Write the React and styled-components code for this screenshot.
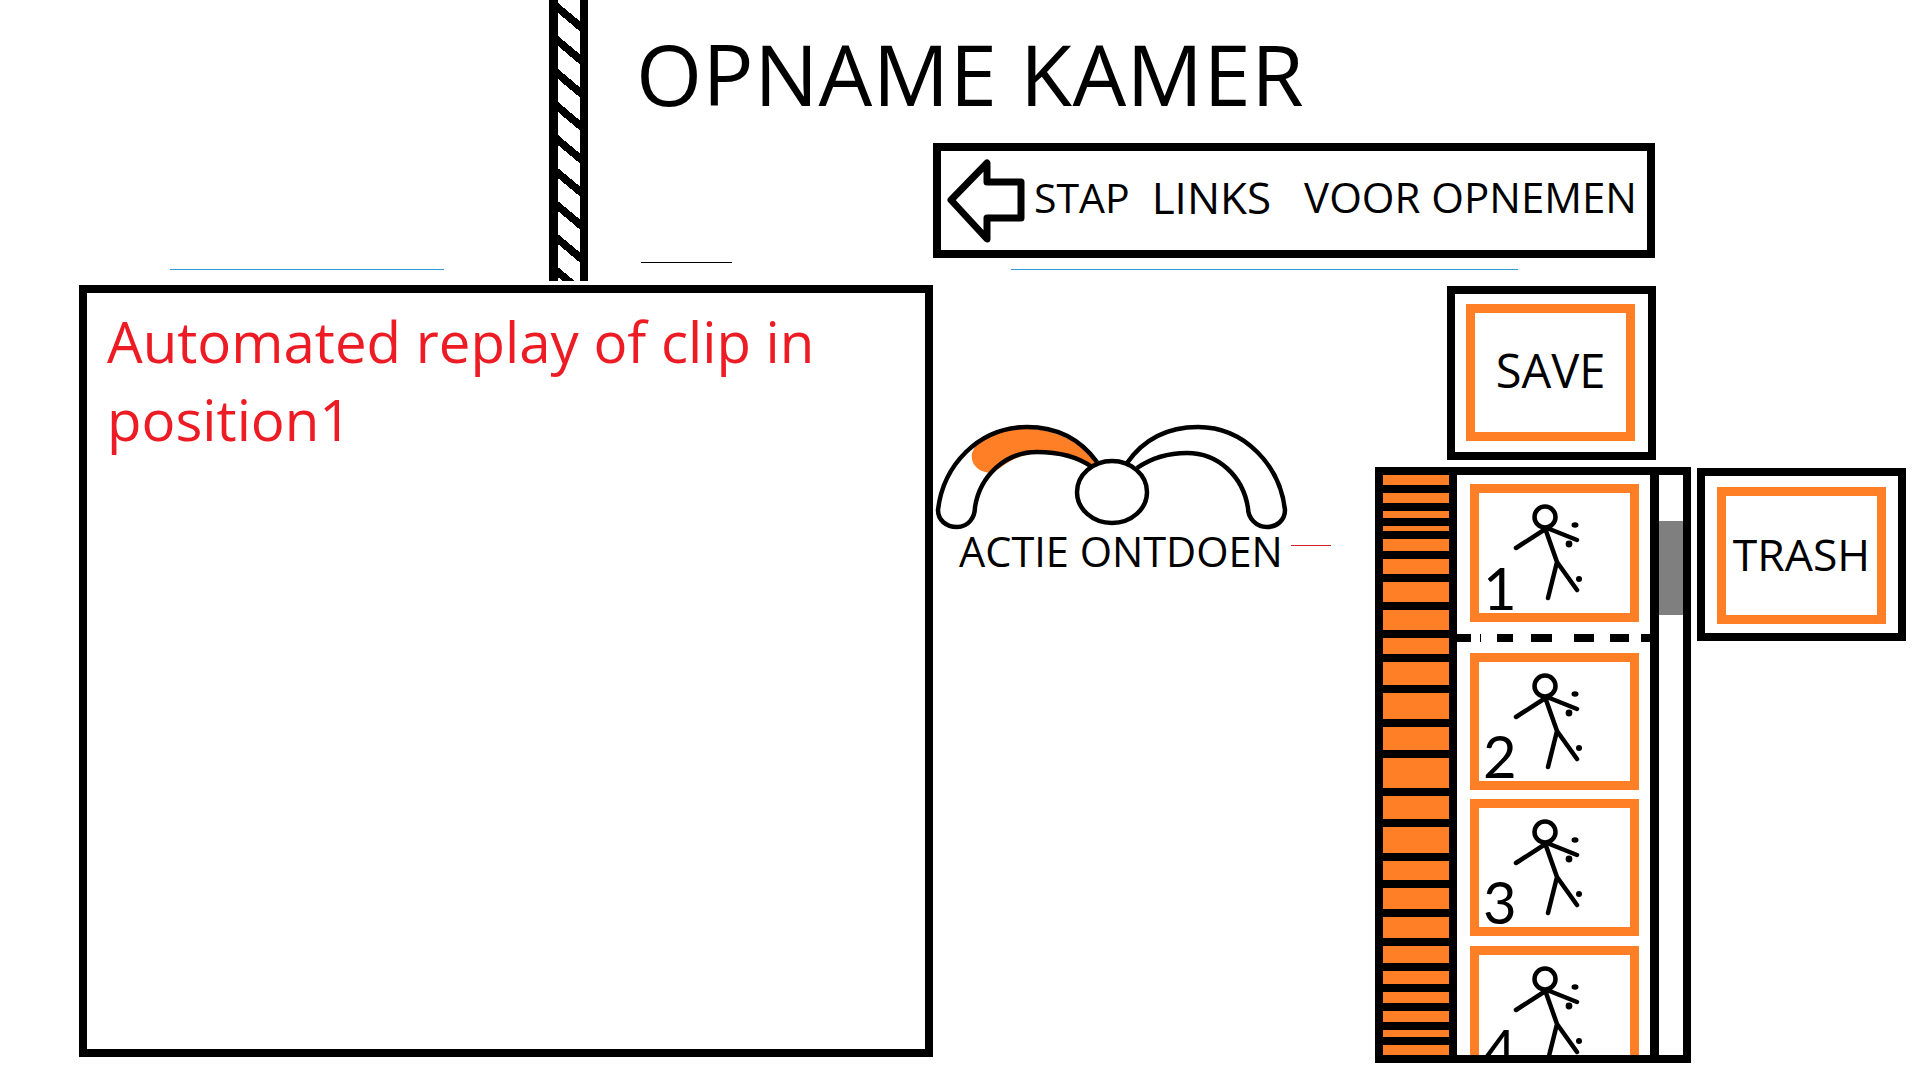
import React from "react";
import styled, { createGlobalStyle } from "styled-components";

const ORANGE = "#ff7f27";
const SPROCKETS = [10, 10, 7, 5, 12, 15, 20, 20, 16, 23, 26, 23, 30, 23, 26, 19, 21, 21, 17, 13, 11, 11, 7, 10];

const GlobalStyle = createGlobalStyle`
  html, body {
    margin: 0;
    padding: 0;
    background: #fff;
  }
  * {
    box-sizing: border-box;
  }
`;

const Page = styled.div`
  display: flex;
  flex-direction: column;
  width: 1920px;
  height: 1080px;
  overflow: hidden;
  background: #fff;
  color: #000;
  font-family: "Open Sans", "Liberation Sans", sans-serif;
`;

// Top band
const Header = styled.header`
  display: flex;
  height: 285px;
  padding-left: 170px;
`;
const BlueRule = styled.div`
  flex: none;
  width: ${p => p.$width}px;
  height: 1px;
  margin-top: ${p => p.$top}px;
  margin-left: ${p => p.$left || 0}px;
  background: #2e9bd6;
`;
const Pole = styled.div`
  flex: none;
  width: 39px;
  height: 281px;
  margin-left: 105px;
  border-left: 9px solid #000;
  border-right: 8px solid #000;
  background: repeating-linear-gradient(
    40deg,
    #fff 0,
    #fff 2.9px,
    #000 2.9px,
    #000 10.6px,
    #fff 10.6px,
    #fff 25.3px
  );
`;
const HeaderMain = styled.div`
  display: flex;
  flex-direction: column;
  width: 1067px;
`;
const Title = styled.h1`
  height: 143px;
  margin: 0;
  padding: 16px 0 0 48px;
  font-size: 85px;
  font-weight: 400;
  letter-spacing: 0.45px;
  line-height: 114px;
  white-space: nowrap;
`;
const HeaderRow = styled.div`
  display: flex;
`;
const NoteColumn = styled.div`
  flex: none;
  width: 345px;
  padding: 119px 0 0 53px;
`;
const BlackRule = styled.div`
  width: 91px;
  height: 1px;
  background: #000;
`;
const StepColumn = styled.div`
  flex: none;
  width: 722px;
`;
const StepBox = styled.div`
  display: flex;
  align-items: center;
  height: 115px;
  padding-left: 6px;
  border: 8px solid #000;
`;
const StepText = styled.span`
  margin: -7px 0 0 ${p => p.$left}px;
  font-size: ${p => p.$size}px;
  line-height: 54px;
  white-space: nowrap;
`;

// Main band
const Body = styled.main`
  display: flex;
  padding-left: 79px;
`;
const Preview = styled.section`
  flex: none;
  width: 854px;
  height: 772px;
  padding: 10px 0 0 20px;
  border: 8px solid #000;
  color: #ed1c24;
  font-size: 56.4px;
  line-height: 78px;
`;
const UndoColumn = styled.div`
  flex: none;
  display: flex;
  flex-direction: column;
  width: 442px;
  padding-top: 135px;
`;
const UndoLabel = styled.div`
  display: flex;
  align-items: center;
  margin: -12px 0 0 26px;
  font-size: 41.5px;
  line-height: 56px;
  white-space: nowrap;
`;
const RedTick = styled.span`
  width: 40px;
  height: 1px;
  margin: -12px 0 0 8px;
  background: #d0202a;
`;
const RightColumn = styled.div`
  flex: none;
  display: grid;
  grid-template-columns: 316px 209px;
  column-gap: 6px;
  align-items: start;
`;
const SaveBox = styled.div`
  grid-column: 1;
  width: 209px;
  height: 174px;
  margin: 1px 0 7px 72px;
  padding: 10px 13px 11px 11px;
  border: 8px solid #000;
`;
const Framed = styled.div`
  display: flex;
  align-items: center;
  justify-content: center;
  height: 100%;
  padding-bottom: ${p => p.$lift}px;
  border: 9px solid ${ORANGE};
  font-size: ${p => p.$size}px;
  line-height: 62px;
`;
const TrashBox = styled.div`
  grid-column: 2;
  grid-row: 2;
  width: 209px;
  height: 173px;
  margin-top: 1px;
  padding: 11px 12px 9px;
  border: 8px solid #000;
`;
const Strip = styled.div`
  grid-column: 1;
  grid-row: 2;
  display: flex;
  width: 316px;
  height: 596px;
  overflow: hidden;
  border: 8px solid #000;
`;
const Sprockets = styled.div`
  flex: none;
  display: flex;
  flex-direction: column;
  gap: 8px;
  width: 74px;
  border-right: 8px solid #000;
  background: #000;
`;
const Sprocket = styled.div`
  flex: none;
  height: ${p => p.$height}px;
  background: ${ORANGE};
`;
const Clips = styled.div`
  flex: none;
  display: flex;
  flex-direction: column;
  width: 193px;
  padding: 9px 11px 0 13px;
`;
const Clip = styled.div`
  position: relative;
  flex: none;
  height: ${p => p.$height}px;
  margin-bottom: ${p => p.$gap}px;
  border: 9px solid ${ORANGE};
`;
const ClipNumber = styled.span`
  position: absolute;
  left: 4px;
  bottom: -8px;
  font-family: "Lato", "Open Sans", sans-serif;
  font-size: 58px;
  line-height: 67px;
`;
const Figure = styled.svg`
  position: absolute;
  left: -9px;
  top: -9px;
`;
const Divider = styled.svg`
  display: block;
  flex: none;
  margin: 0 -11px 11px -13px;
`;
const Track = styled.div`
  flex: none;
  width: 33px;
  padding-top: 46px;
  border-left: 9px solid #000;
`;
const Thumb = styled.div`
  height: 94px;
  background: #7f7f7f;
`;

const StickFigure = () => (
  <Figure width="169" height="138" viewBox="0 0 169 138">
    <circle cx="75" cy="33" r="10.5" fill="none" stroke="#000" strokeWidth="4.5" />
    <path
      d="M46 64 L77 44 L107 56 M75 44 L87 78 L78 114 M87 78 L107 106"
      fill="none"
      stroke="#000"
      strokeWidth="4.5"
      strokeLinecap="round"
      strokeLinejoin="round"
    />
    <ellipse cx="105" cy="41" rx="3.5" ry="2.7" />
    <circle cx="99" cy="60" r="3.4" />
    <circle cx="109" cy="95" r="3" />
  </Figure>
);

const ArrowIcon = () => (
  <svg width="78" height="90" viewBox="947 155 78 90" style={{ flex: "none" }}>
    <path
      d="M951 199 L987 162 L987 181 L1021 181 L1021 217 L987 217 L987 238 Z"
      fill="#fff"
      stroke="#000"
      strokeWidth="7"
      strokeLinejoin="round"
    />
  </svg>
);

const UndoIcon = () => (
  <svg width="370" height="115" viewBox="933 420 370 115">
    <path
      d="M972 453 C976 444 980 440 986 436 C1010 424 1065 422 1096 462 L1092 468 C1072 450 1030 444 1000 468 L990 473 C978 472 970 464 972 453 Z"
      fill={ORANGE}
    />
    <g fill="none" stroke="#000" strokeWidth="4.5" strokeLinejoin="round">
      <path d="M1097 462 C1078 436 1052 427 1027 427 C978 427 943 466 938 510 C938 520 946 527 957 527 C968 527 975 518 975 507 C980 476 1005 452 1037 452 C1060 452 1078 457 1092 467" />
      <path d="M1127 463 C1146 436 1172 427 1198 427 C1245 427 1280 466 1285 510 C1285 520 1277 527 1267 527 C1256 527 1248 518 1248 508 C1243 476 1218 453 1187 453 C1168 453 1150 459 1137 468" />
      <ellipse cx="1112" cy="492" rx="35" ry="31" />
    </g>
  </svg>
);

const DIVIDER_DASHES = [
  [0, 14],
  [23, 1],
  [40, 16],
  [74, 21],
  [117, 20],
  [153, 19],
  [184, 9],
];

const App = () => (
  <Page>
    <GlobalStyle />
    <Header>
      <BlueRule $width={274} $top={269} />
      <Pole />
      <HeaderMain>
        <Title>OPNAME KAMER</Title>
        <HeaderRow>
          <NoteColumn>
            <BlackRule />
          </NoteColumn>
          <StepColumn>
            <StepBox>
              <ArrowIcon />
              <StepText $left={9} $size={41}>STAP</StepText>
              <StepText $left={22} $size={44}>LINKS</StepText>
              <StepText $left={33} $size={42}>VOOR OPNEMEN</StepText>
            </StepBox>
            <BlueRule $width={507} $top={11} $left={78} />
          </StepColumn>
        </HeaderRow>
      </HeaderMain>
    </Header>
    <Body>
      <Preview>
        Automated replay of clip in
        <br />
        position1
      </Preview>
      <UndoColumn>
        <UndoIcon />
        <UndoLabel>
          ACTIE ONTDOEN
          <RedTick />
        </UndoLabel>
      </UndoColumn>
      <RightColumn>
        <SaveBox>
          <Framed $size={47} $lift={5}>SAVE</Framed>
        </SaveBox>
        <Strip>
          <Sprockets>
            {SPROCKETS.map((height, i) => (
              <Sprocket key={i} $height={height} />
            ))}
          </Sprockets>
          <Clips>
            <Clip $height={138} $gap={12}>
              <StickFigure />
              <ClipNumber>1</ClipNumber>
            </Clip>
            <Divider width="193" height="8">
              {DIVIDER_DASHES.map(([x, w]) => (
                <rect key={x} x={x} y="0" width={w} height="8" />
              ))}
            </Divider>
            <Clip $height={137} $gap={9}>
              <StickFigure />
              <ClipNumber>2</ClipNumber>
            </Clip>
            <Clip $height={137} $gap={10}>
              <StickFigure />
              <ClipNumber>3</ClipNumber>
            </Clip>
            <Clip $height={138} $gap={0}>
              <StickFigure />
              <ClipNumber>4</ClipNumber>
            </Clip>
          </Clips>
          <Track>
            <Thumb />
          </Track>
        </Strip>
        <TrashBox>
          <Framed $size={44.5} $lift={3}>TRASH</Framed>
        </TrashBox>
      </RightColumn>
    </Body>
  </Page>
);

export default App;
